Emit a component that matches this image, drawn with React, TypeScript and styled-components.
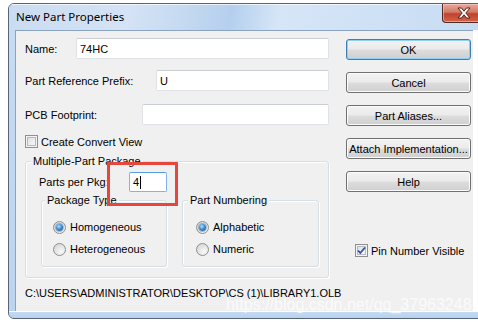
import React from "react";
import styled, { createGlobalStyle } from "styled-components";

const GlobalStyle = createGlobalStyle`
  html, body {
    margin: 0;
    padding: 0;
    background: #ffffff;
  }
  body {
    font-family: "Liberation Sans", Arial, sans-serif;
    font-size: 11px;
    color: #000;
  }
  * {
    box-sizing: border-box;
  }
`;

const Page = styled.div`
  position: relative;
  width: 478px;
  height: 323px;
  overflow: hidden;
  padding: 3px 0 0 8px;
  background: #fff;
`;

const Window = styled.div`
  width: 484px;
  height: 316px;
  display: flex;
  flex-direction: column;
  border: 1px solid #56657a;
  border-radius: 6px 6px 6px 6px;
  overflow: hidden;
  background: linear-gradient(180deg, #c8dcf2 0%, #bcd4ee 100%);
`;

const TitleBar = styled.div`
  height: 26px;
  display: flex;
  align-items: flex-start;
  padding-left: 7px;
  background: linear-gradient(
    100deg,
    #cadcf1 0%,
    #d4e3f5 25%,
    #c3d8f0 38%,
    #b4cfee 46%,
    #d6e6f7 56%,
    #cfe1f5 75%,
    #c6dbf2 100%
  );
  box-shadow: inset 0 1px 0 rgba(255, 255, 255, 0.7);
`;

const Title = styled.span`
  margin-top: 5px;
  font-family: "Noto Sans", "Open Sans", sans-serif;
  font-size: 11.5px;
  line-height: 16px;
  color: #000;
`;

const CloseButton = styled.div`
  margin-left: auto;
  margin-right: 6px;
  width: 43px;
  height: 19px;
  display: flex;
  align-items: center;
  justify-content: center;
  border: 1px solid #4f2a25;
  border-top: none;
  border-radius: 0 0 4px 4px;
  background: linear-gradient(180deg, #e8a89a 0%, #d47a67 45%, #c0432c 55%, #d2644a 100%);
  box-shadow: inset 0 0 0 1px rgba(255, 220, 210, 0.5);
`;

const BodyRow = styled.div`
  display: flex;
  height: 281px;
  padding-left: 6px;
`;

const Client = styled.div`
  width: 458px;
  display: flex;
  flex-direction: column;
  padding: 7px 2px 0 9px;
  background: #f0f0f0;
  border-top: 1px solid #8aa3c0;
  border-left: 1px solid #8aa3c0;
`;

const RightStrip = styled.div`
  flex: 1;
  background: #ffffff;
`;

const BottomFrame = styled.div`
  flex: 1;
  background: linear-gradient(180deg, #c3daf2 0%, #b7d1ee 100%);
  border-top: 1px solid #ffffff;
`;

const MainRow = styled.div`
  display: flex;
  gap: 17px;
`;

const LeftCol = styled.div`
  width: 304px;
  display: flex;
  flex-direction: column;
`;

const RightCol = styled.div`
  width: 125px;
  display: flex;
  flex-direction: column;
  padding-top: 1px;
  gap: 12px;
`;

const FieldRow = styled.div<{ $top: number; $width?: number; $height?: number }>`
  display: flex;
  align-items: center;
  height: ${(p) => p.$height ?? 21}px;
  width: ${(p) => (p.$width ? `${p.$width}px` : "auto")};
  margin-top: ${(p) => p.$top}px;
`;

const FieldLabel = styled.span<{ $width: number }>`
  width: ${(p) => p.$width}px;
  flex-shrink: 0;
  white-space: nowrap;
`;

const TextBox = styled.div<{ $focused?: boolean }>`
  flex: 1;
  height: 100%;
  display: flex;
  align-items: center;
  padding-left: 3px;
  background: #ffffff;
  border: 1px solid ${(p) => (p.$focused ? "#7eb4ea" : "#dfe3e8")};
  border-top-color: ${(p) => (p.$focused ? "#569de5" : "#c9ced6")};
  border-radius: 2px;
`;

const Caret = styled.span`
  display: inline-block;
  width: 1px;
  height: 13px;
  margin-left: 1px;
  background: #000;
`;

const CheckRow = styled.label<{ $top: number; $left?: number }>`
  display: flex;
  align-items: center;
  height: 13px;
  gap: 3px;
  margin-top: ${(p) => p.$top}px;
  margin-left: ${(p) => p.$left ?? 0}px;
  white-space: nowrap;
`;

const CheckBox = styled.span`
  width: 13px;
  height: 13px;
  flex-shrink: 0;
  display: flex;
  align-items: center;
  justify-content: center;
  border: 1px solid #8e8f8f;
  box-shadow: inset 0 0 0 1px #f4f4f4, inset 0 0 0 2px #b5b8bd;
  background: linear-gradient(135deg, #d8d8d8 0%, #f0f0f0 60%, #fbfbfb 100%);
`;

const Group = styled.div<{ $width?: number }>`
  position: relative;
  display: flex;
  flex-direction: column;
  width: ${(p) => (p.$width ? `${p.$width}px` : "auto")};
  border: 1px solid #d5dfe5;
  border-radius: 3px;
  box-shadow: inset 1px 1px 0 #ffffff, 1px 1px 0 #ffffff;
`;

const Legend = styled.span`
  align-self: flex-start;
  margin: -7px 0 0 -8px;
  padding: 0 2px;
  line-height: 13px;
  background: #f0f0f0;
  white-space: nowrap;
`;

const OuterGroup = styled(Group)`
  margin-top: 13px;
  padding: 0 9px 10px 13px;
`;

const InnerRow = styled.div`
  display: flex;
  gap: 15px;
  margin: 8px 0 0 2px;
`;

const InnerGroup = styled(Group)<{ $pad: number }>`
  height: 67px;
  padding-left: ${(p) => p.$pad}px;
`;

const RadioRow = styled.div<{ $top: number }>`
  display: flex;
  align-items: center;
  gap: 4px;
  height: 14px;
  margin-top: ${(p) => p.$top}px;
  white-space: nowrap;
`;

const Radio = styled.span<{ $checked?: boolean }>`
  width: 13px;
  height: 13px;
  flex-shrink: 0;
  border-radius: 50%;
  border: 1px solid #8e8f8f;
  display: flex;
  align-items: center;
  justify-content: center;
  background: radial-gradient(circle at 65% 70%, #f9f9f9 0%, #e2e2e2 55%, #cfcfcf 100%);

  &::after {
    content: "";
    display: ${(p) => (p.$checked ? "block" : "none")};
    width: 7px;
    height: 7px;
    border-radius: 50%;
    background: radial-gradient(circle at 40% 35%, #b8e0fb 0%, #3c8fd7 45%, #104f95 100%);
    box-shadow: 0 0 0 1px rgba(30, 80, 140, 0.35);
  }
`;

const Highlight = styled.div`
  position: absolute;
  left: 81px;
  top: 0;
  width: 71px;
  height: 44px;
  border: 3px solid #e6463c;
  pointer-events: none;
`;

const Button = styled.div<{ $default?: boolean }>`
  height: 21px;
  display: flex;
  align-items: center;
  justify-content: center;
  border: 1px solid ${(p) => (p.$default ? "#3c7fb1" : "#707070")};
  border-radius: 3px;
  background: linear-gradient(180deg, #f2f2f2 0%, #ebebeb 48%, #dddddd 52%, #cfcfcf 100%);
  box-shadow: inset 0 0 0 1px ${(p) => (p.$default ? "#8fd0f5" : "#fcfcfc")};
  white-space: nowrap;
`;

const PathText = styled.div`
  margin-top: 8px;
  line-height: 14px;
  white-space: nowrap;
`;

const Watermark = styled.div`
  position: absolute;
  left: 226px;
  top: 296px;
  font-family: "Liberation Sans", Arial, sans-serif;
  font-size: 16px;
  color: rgba(255, 255, 255, 0.72);
  white-space: nowrap;
  pointer-events: none;
`;

const CloseIcon = () => (
  <svg width="14" height="12" viewBox="0 0 14 12">
    <path
      d="M1 1h3.5L7 4.2 9.5 1H13L8.8 6 13 11H9.5L7 7.8 4.5 11H1l4.2-5z"
      fill="#ffffff"
      stroke="#5a2118"
      strokeWidth="1"
    />
  </svg>
);

const CheckMark = () => (
  <svg width="9" height="9" viewBox="0 0 9 9">
    <path d="M1 4.5l2.3 2.5L8 1.5" fill="none" stroke="#2c4fa8" strokeWidth="1.8" />
  </svg>
);

const buttons = ["OK", "Cancel", "Part Aliases...", "Attach Implementation...", "Help"];

export default function App() {
  return (
    <Page>
      <GlobalStyle />
      <Window>
        <TitleBar>
          <Title>New Part Properties</Title>
          <CloseButton>
            <CloseIcon />
          </CloseButton>
        </TitleBar>
        <BodyRow>
          <Client>
            <MainRow>
              <LeftCol>
                <FieldRow $top={0}>
                  <FieldLabel $width={51}>Name:</FieldLabel>
                  <TextBox>74HC</TextBox>
                </FieldRow>
                <FieldRow $top={11}>
                  <FieldLabel $width={131}>Part Reference Prefix:</FieldLabel>
                  <TextBox>U</TextBox>
                </FieldRow>
                <FieldRow $top={13}>
                  <FieldLabel $width={117}>PCB Footprint:</FieldLabel>
                  <TextBox />
                </FieldRow>
                <CheckRow $top={10}>
                  <CheckBox />
                  Create Convert View
                </CheckRow>
                <OuterGroup>
                  <Legend>Multiple-Part Package</Legend>
                  <FieldRow $top={4} $width={128} $height={20}>
                    <FieldLabel $width={90}>Parts per Pkg:</FieldLabel>
                    <TextBox $focused>
                      4
                      <Caret />
                    </TextBox>
                  </FieldRow>
                  <InnerRow>
                    <InnerGroup $width={126} $pad={11}>
                      <Legend>Package Type</Legend>
                      <RadioRow $top={13}>
                        <Radio $checked />
                        Homogeneous
                      </RadioRow>
                      <RadioRow $top={8}>
                        <Radio />
                        Heterogeneous
                      </RadioRow>
                    </InnerGroup>
                    <InnerGroup $width={137} $pad={13}>
                      <Legend>Part Numbering</Legend>
                      <RadioRow $top={13}>
                        <Radio $checked />
                        Alphabetic
                      </RadioRow>
                      <RadioRow $top={8}>
                        <Radio />
                        Numeric
                      </RadioRow>
                    </InnerGroup>
                  </InnerRow>
                  <Highlight />
                </OuterGroup>
              </LeftCol>
              <RightCol>
                {buttons.map((b, i) => (
                  <Button key={b} $default={i === 0}>
                    {b}
                  </Button>
                ))}
                <CheckRow $top={40} $left={9}>
                  <CheckBox>
                    <CheckMark />
                  </CheckBox>
                  Pin Number Visible
                </CheckRow>
              </RightCol>
            </MainRow>
            <PathText>C:\USERS\ADMINISTRATOR\DESKTOP\CS (1)\LIBRARY1.OLB</PathText>
          </Client>
          <RightStrip />
        </BodyRow>
        <BottomFrame />
      </Window>
      <Watermark>https://blog.csdn.net/qq_37963248</Watermark>
    </Page>
  );
}
